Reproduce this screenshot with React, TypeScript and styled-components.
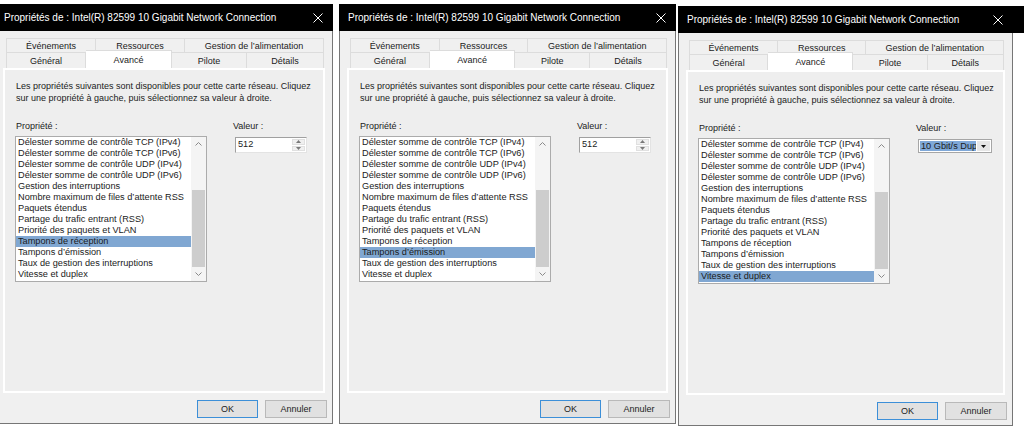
import React from 'react';
import styled, { createGlobalStyle } from 'styled-components';

const GlobalStyle = createGlobalStyle`
  html, body {
    margin: 0;
    padding: 0;
    background: #ffffff;
  }
  body {
    font-family: 'Liberation Sans', Arial, sans-serif;
    color: #1b1b1b;
  }
`;

const Desktop = styled.div`
  display: flex;
  align-items: flex-start;
  width: 1024px;
  height: 428px;
  overflow: hidden;
  background: #ffffff;
`;

const Window = styled.div<{ $left: number; $top: number; $width: number }>`
  flex: 0 0 auto;
  width: ${p => p.$width}px;
  margin-left: ${p => p.$left}px;
  margin-top: ${p => p.$top}px;
  display: flex;
  flex-direction: column;
`;

// $bleed: the black title strip of the last window runs on past its frame in the shot
const TitleBar = styled.div<{ $bleed?: number }>`
  height: 27px;
  background: #000000;
  color: #ffffff;
  display: flex;
  align-items: center;
  justify-content: space-between;
  padding: 0 10px 0 9px;
  font-size: 10px;
  white-space: nowrap;
  box-shadow: ${p => (p.$bleed ? `${p.$bleed}px 0 0 #000` : 'none')};
`;

const CloseIcon = styled.svg`
  width: 10px;
  height: 10px;
  flex: 0 0 auto;
`;

const Body = styled.div`
  background: #f0f0f0;
  border: 1px solid #767676;
  border-top: none;
  padding: 7px 5px 5px;
  display: flex;
  flex-direction: column;
`;

const TabStrip = styled.div`
  margin: 0 3px 0 5px;
  display: flex;
  flex-direction: column;
`;

const TabRow = styled.div<{ $height: number }>`
  display: flex;
  align-items: flex-end;
  height: ${p => p.$height}px;
`;

const Tab = styled.div<{ $width: number; $active?: boolean }>`
  box-sizing: border-box;
  width: ${p => p.$width}px;
  height: ${p => (p.$active ? 'calc(100% + 2px)' : '100%')};
  margin-top: ${p => (p.$active ? '-2px' : '0')};
  position: ${p => (p.$active ? 'relative' : 'static')};
  z-index: ${p => (p.$active ? 1 : 0)};
  background: ${p => (p.$active ? '#ffffff' : '#f0f0f0')};
  border: 1px solid #dcdcdc;
  border-bottom: none;
  border-left: none;
  display: flex;
  align-items: center;
  justify-content: center;
  font-size: 9px;
  white-space: nowrap;

  &:first-child {
    border-left: 1px solid #dcdcdc;
  }
`;

const Panel = styled.div`
  box-sizing: border-box;
  height: 325px;
  margin: 0 2px;
  border: 2px solid #ffffff;
  background: #eeeeee;
  padding: 10px 10px;
  display: flex;
  flex-direction: column;
`;

const Description = styled.p`
  margin: 0 0 0 1px;
  font-size: 9px;
  line-height: 12px;
  white-space: nowrap;
`;

const Fields = styled.div`
  display: flex;
  margin-top: 16px;
`;

const PropertyColumn = styled.div`
  display: flex;
  flex-direction: column;
  width: 192px;
`;

const ValueColumn = styled.div`
  display: flex;
  flex-direction: column;
  margin-left: 25px;
`;

const FieldLabel = styled.div`
  margin-left: 1px;
  font-size: 9px;
  line-height: 12px;
`;

const ListBox = styled.div`
  box-sizing: border-box;
  margin-top: 4px;
  width: 192px;
  height: 146px;
  border: 1px solid #ababab;
  background: #ffffff;
  display: flex;
`;

const Items = styled.div`
  flex: 1;
  display: flex;
  flex-direction: column;
  overflow: hidden;
`;

const ListItem = styled.div<{ $selected?: boolean }>`
  height: 11px;
  line-height: 11px;
  padding-left: 2px;
  font-size: 9.2px;
  white-space: nowrap;
  background: ${p => (p.$selected ? '#80a7d2' : 'transparent')};
`;

const Scrollbar = styled.div`
  width: 15px;
  display: flex;
  flex-direction: column;
  background: #f4f4f4;
`;

const ScrollArrow = styled.div`
  height: 14px;
  display: flex;
  align-items: center;
  justify-content: center;
`;

const Track = styled.div`
  flex: 1;
  display: flex;
  flex-direction: column;
  justify-content: flex-end;
`;

const Thumb = styled.div`
  height: 77px;
  margin: 0 1px;
  background: #cdcdcd;
`;

const SpinBox = styled.div`
  box-sizing: border-box;
  margin: 5px 0 0 3px;
  width: 72px;
  height: 16px;
  border: 1px solid;
  border-color: #a0a0a0 #e3e3e3 #e3e3e3 #a0a0a0;
  background: #ffffff;
  display: flex;
`;

const SpinText = styled.div`
  flex: 1;
  padding-left: 2px;
  font-size: 9.2px;
  line-height: 13px;
`;

const SpinButtons = styled.div`
  width: 13px;
  display: flex;
  flex-direction: column;
  padding: 1px 1px 1px 0;
  gap: 1px;
`;

const SpinButton = styled.div`
  flex: 1;
  background: #f0f0f0;
  border: 1px solid #e0e0e0;
  display: flex;
  align-items: center;
  justify-content: center;
`;

const ComboBox = styled.div`
  box-sizing: border-box;
  margin: 5px 0 0 3px;
  width: 74px;
  height: 14px;
  border: 1px solid #a6a6a6;
  background: #ffffff;
  padding: 1px;
  display: flex;
`;

const ComboSelection = styled.div`
  flex: 1;
  background: #7fa8d8;
  overflow: hidden;
  white-space: nowrap;
  font-size: 9.2px;
  line-height: 10px;
  padding-left: 1px;
`;

const ComboButton = styled.div`
  width: 13px;
  margin-left: 1px;
  background: #e6e6e6;
  display: flex;
  align-items: center;
  justify-content: center;
`;

const ButtonRow = styled.div`
  display: flex;
  justify-content: flex-end;
  gap: 7px;
  margin-top: 7px;
`;

const DialogButton = styled.button<{ $width: number; $primary?: boolean }>`
  box-sizing: border-box;
  width: ${p => p.$width}px;
  height: 18px;
  padding: 0;
  font-family: inherit;
  font-size: 9px;
  color: #1b1b1b;
  background: #e1e1e1;
  border: 1px solid ${p => (p.$primary ? '#3c8fd8' : '#b9b9b9')};
`;

const properties = [
  'Délester somme de contrôle TCP (IPv4)',
  'Délester somme de contrôle TCP (IPv6)',
  'Délester somme de contrôle UDP (IPv4)',
  'Délester somme de contrôle UDP (IPv6)',
  'Gestion des interruptions',
  'Nombre maximum de files d\u2019attente RSS',
  'Paquets étendus',
  'Partage du trafic entrant (RSS)',
  'Priorité des paquets et VLAN',
  'Tampons de réception',
  'Tampons d\u2019émission',
  'Taux de gestion des interruptions',
  'Vitesse et duplex',
];

const topTabs = [
  { label: 'Événements', width: 90 },
  { label: 'Ressources', width: 89 },
  { label: 'Gestion de l\u2019alimentation', width: 139 },
];

const bottomTabs = [
  { label: 'Général', width: 80 },
  { label: 'Avancé', width: 86 },
  { label: 'Pilote', width: 75 },
  { label: 'Détails', width: 77 },
];

const Chevron = ({ down }: { down?: boolean }) => (
  <svg width="7" height="4" viewBox="0 0 7 4">
    <polyline
      points={down ? '0.5,0.5 3.5,3.5 6.5,0.5' : '0.5,3.5 3.5,0.5 6.5,3.5'}
      fill="none"
      stroke="#8a8a8a"
      strokeWidth="1"
    />
  </svg>
);

const SmallTriangle = ({ down, color = '#7a7a7a' }: { down?: boolean; color?: string }) => (
  <svg width="5" height="3" viewBox="0 0 5 3">
    <polygon points={down ? '0,0 5,0 2.5,3' : '0,3 5,3 2.5,0'} fill={color} />
  </svg>
);

type DialogProps = {
  left: number;
  top: number;
  width: number;
  selected: number;
  combo?: boolean;
  bleed?: number;
};

const PropertiesDialog: React.FC<DialogProps> = ({ left, top, width, selected, combo, bleed }) => (
  <Window $left={left} $top={top} $width={width}>
    <TitleBar $bleed={bleed}>
      <span>Propriétés de : Intel(R) 82599 10 Gigabit Network Connection</span>
      <CloseIcon viewBox="0 0 10 10">
        <line x1="0.5" y1="0.5" x2="9.5" y2="9.5" stroke="#fff" strokeWidth="1" />
        <line x1="9.5" y1="0.5" x2="0.5" y2="9.5" stroke="#fff" strokeWidth="1" />
      </CloseIcon>
    </TitleBar>
    <Body>
      <TabStrip>
        <TabRow $height={14}>
          {topTabs.map(t => (
            <Tab key={t.label} $width={t.width}>
              {t.label}
            </Tab>
          ))}
        </TabRow>
        <TabRow $height={16}>
          {bottomTabs.map(t => (
            <Tab key={t.label} $width={t.width} $active={t.label === 'Avancé'}>
              {t.label}
            </Tab>
          ))}
        </TabRow>
      </TabStrip>
      <Panel>
        <Description>
          Les propriétés suivantes sont disponibles pour cette carte réseau. Cliquez
          <br />
          sur une propriété à gauche, puis sélectionnez sa valeur à droite.
        </Description>
        <Fields>
          <PropertyColumn>
            <FieldLabel>Propriété :</FieldLabel>
            <ListBox>
              <Items>
                {properties.map((p, i) => (
                  <ListItem key={p} $selected={i === selected}>
                    {p}
                  </ListItem>
                ))}
              </Items>
              <Scrollbar>
                <ScrollArrow>
                  <Chevron />
                </ScrollArrow>
                <Track>
                  <Thumb />
                </Track>
                <ScrollArrow>
                  <Chevron down />
                </ScrollArrow>
              </Scrollbar>
            </ListBox>
          </PropertyColumn>
          <ValueColumn>
            <FieldLabel>Valeur :</FieldLabel>
            {combo ? (
              <ComboBox>
                <ComboSelection>10 Gbit/s Dup</ComboSelection>
                <ComboButton>
                  <SmallTriangle down color="#111" />
                </ComboButton>
              </ComboBox>
            ) : (
              <SpinBox>
                <SpinText>512</SpinText>
                <SpinButtons>
                  <SpinButton>
                    <SmallTriangle />
                  </SpinButton>
                  <SpinButton>
                    <SmallTriangle down />
                  </SpinButton>
                </SpinButtons>
              </SpinBox>
            )}
          </ValueColumn>
        </Fields>
      </Panel>
      <ButtonRow>
        <DialogButton $width={61} $primary>
          OK
        </DialogButton>
        <DialogButton $width={62}>Annuler</DialogButton>
      </ButtonRow>
    </Body>
  </Window>
);

const App: React.FC = () => (
  <>
    <GlobalStyle />
    <Desktop>
      <PropertiesDialog left={-5} top={4} width={338} selected={9} />
      <PropertiesDialog left={6} top={4} width={337} selected={10} />
      <PropertiesDialog left={2} top={6} width={335} selected={12} combo bleed={11} />
    </Desktop>
  </>
);

export default App;
